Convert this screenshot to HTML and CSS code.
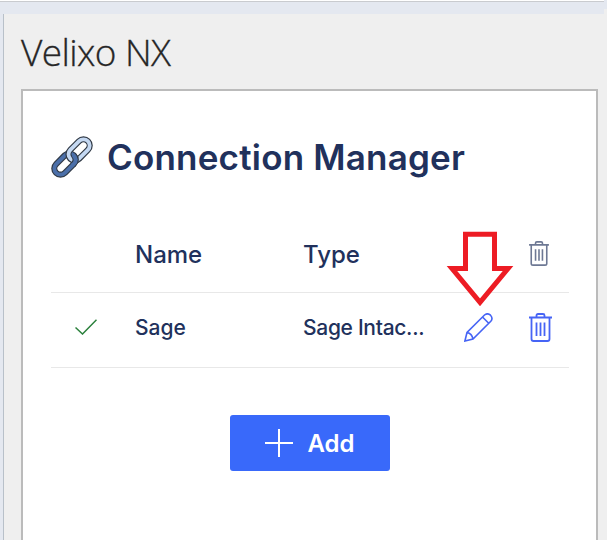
FILE: index.html
```
<!DOCTYPE html>
<html lang="en">
<head>
<meta charset="utf-8">
<title>Velixo NX</title>
<link rel="stylesheet" href="styles.css">
</head>
<body>
<svg width="0" height="0" class="defs">
  <symbol id="trash" viewBox="0 0 23 29">
    <path d="M0 4.5H23M7.5 4V2.4Q7.5 1 9 1H14Q15.500 1 15.500 2.400V4M2.500 4.500V26Q2.500 28 4.500 28H18.500Q20.500 28 20.500 26V4.500M7.500 9.500V23M11.500 9.500V23M15.500 9.500V23"/>
  </symbol>
</svg>
<div class="ribbon"></div>
<main class="pane">
  <h1 class="pane-title">Velixo NX</h1>
  <section class="card">
    <header class="heading">
      <svg class="link" viewBox="0 0 44 44">
        <g transform="rotate(-45 22 22)" fill="none">
          <rect x="-1.500" y="15.500" width="26" height="13" rx="6.500" stroke="#303945" stroke-width="6.500"/>
          <rect x="-1.500" y="15.500" width="26" height="13" rx="6.500" stroke="#4b6fa9" stroke-width="4"/>
          <rect x="19.500" y="15.500" width="26" height="13" rx="6.500" stroke="#303945" stroke-width="6.500"/>
          <rect x="19.500" y="15.500" width="26" height="13" rx="6.500" stroke="#c4d8f2" stroke-width="4"/>
          <path d="M17 28.500Q24.500 28.500 24.500 22" stroke="#303945" stroke-width="6"/>
          <path d="M16 28.500H18Q24.500 28.500 24.500 21.500" stroke="#4b6fa9" stroke-width="4"/>
        </g>
      </svg>
      <h2>Connection Manager</h2>
    </header>
    <div class="row head">
      <span></span><span>Name</span><span>Type</span><span></span>
      <svg class="trash small"><use href="#trash"/></svg>
    </div>
    <div class="row item">
      <svg class="check" viewBox="0 0 22 16"><path d="M.5 8.500L7.500 15L21.500 .8"/></svg>
      <span>Sage</span><span class="value">Sage Intac...</span>
      <svg class="pencil" viewBox="0 0 29 29"><path d="M.9 28L3 19.500L20.500 2Q23.500 -.5 26.500 2.200Q29.300 5.300 26.800 8.300L9 26ZM3 19.500Q8 20.500 9 26M18.500 4L24.700 10.300"/></svg>
      <svg class="trash"><use href="#trash"/></svg>
    </div>
    <button class="add"><svg viewBox="0 0 28 28"><path d="M14 0V28M0 14H28"/></svg><span>Add</span></button>
  </section>
</main>
<svg class="arrow" viewBox="446 229 68 80"><path d="M465.500 234.300H494.500V268.500H508L480 302.300L452 268.500H465.500Z"/></svg>
</body>
</html>
```
FILE: styles.css
```
* { box-sizing: border-box; }
body {
  margin: 0;
  height: 540px;
  overflow: hidden;
  background: #e4e8f0;
  font-family: Inter, "Liberation Sans", sans-serif;
  color: #21315c;
}
.defs { position: absolute; }
.ribbon {
  height: 14px;
  background:
    linear-gradient(#e4e8f0 9px, #efefef 9px) right / 3px 14px no-repeat,
    linear-gradient(#fff 1px, #c9cbcf 1px, #c9cbcf 2px, #e4e8f0 2px);
}
.pane {
  height: 526px;
  margin-left: 3px;
  padding: 14px 9px 0 17px;
  border-left: 1px solid #b8c0c9;
  background: #efefef;
}
.pane-title {
  margin: 0 0 11px;
  height: 50px;
  font: 300 37px/47px "Open Sans", sans-serif;
  letter-spacing: -0.6px;
  color: #262626;
  -webkit-text-stroke: 0.3px #262626;
}
.card {
  height: 451px;
  padding: 43px 27px 0 28px;
  border: 2px solid #bbb;
  border-bottom: 0;
  background: #fff;
}
.heading { display: flex; align-items: center; gap: 14px; height: 46px; }
.heading h2 { margin: 0; font-size: 35px; font-weight: 560; letter-spacing: 0.2px; white-space: nowrap; }
.link { width: 42px; height: 42px; flex: none; overflow: visible; }
.row {
  display: grid;
  grid-template-columns: 84px 168px 161px 65px 1fr;
  align-items: center;
  border-bottom: 1px solid #e8e8e8;
}
.head { height: 113px; padding-top: 36px; font-size: 24px; font-weight: 480; }
.item { height: 75px; padding-bottom: 6px; font-size: 21px; font-weight: 460; }
.value { letter-spacing: -0.3px; }
svg path { vector-effect: non-scaling-stroke; }
.check { width: 22px; height: 16px; margin-left: 24px; fill: none; stroke: #2b803c; stroke-width: 1.5; }
.pencil { width: 29px; height: 29px; fill: none; stroke: #4664f5; stroke-width: 1.6; }
.trash { width: 23px; height: 29px; fill: none; stroke: #4664f5; stroke-width: 1.8; }
.small { width: 20px; height: 25px; margin-top: -2px; stroke: #6d7894; stroke-width: 1.6; }
.add {
  display: flex;
  align-items: center;
  justify-content: center;
  gap: 14px;
  width: 160px;
  height: 56px;
  margin: 47px auto 0;
  padding: 0;
  border: 0;
  border-radius: 3px;
  background: #3969fa;
  color: #fff;
  font: 580 24px Inter, sans-serif;
}
.add svg { width: 28px; height: 28px; stroke: #fff; stroke-width: 2; }
.arrow { position: absolute; left: 446px; top: 229px; width: 68px; height: 80px; fill: #fff; stroke: #ed1c24; stroke-width: 5; }
```
